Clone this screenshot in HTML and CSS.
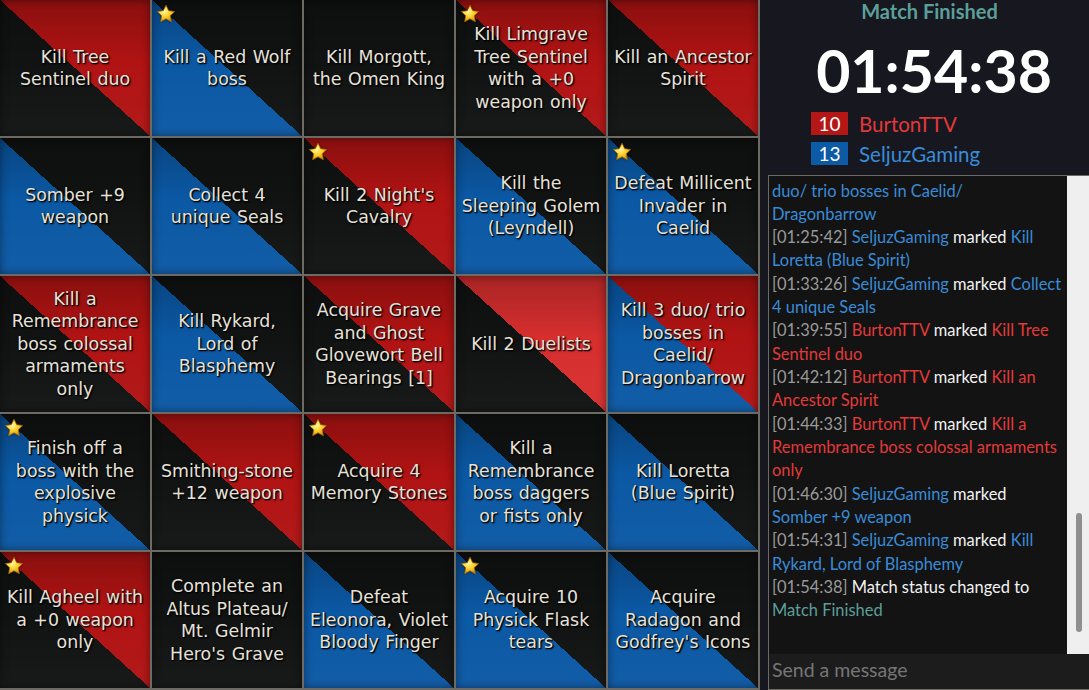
FILE: index.html
```html
<!DOCTYPE html>
<html lang="en">
<head>
<meta charset="utf-8">
<title>Bingo Match</title>
<link rel="stylesheet" href="styles.css">
</head>
<body>
<svg class="defs" width="0" height="0" aria-hidden="true">
  <defs>
    <radialGradient id="starFill" cx="40%" cy="35%" r="70%">
      <stop offset="0" stop-color="#fff7b0"/>
      <stop offset="0.45" stop-color="#ffd633"/>
      <stop offset="1" stop-color="#d98e00"/>
    </radialGradient>
    <symbol id="star" viewBox="0 0 24 24">
      <path d="M12 1.6l3.2 6.5 7.1 1-5.2 5 1.3 7.1L12 17.8l-6.4 3.4 1.3-7.1-5.2-5 7.1-1z" fill="url(#starFill)" stroke="#a86d00" stroke-width="0.9" stroke-linejoin="round"/>
    </symbol>
  </defs>
</svg>
<main class="board">
  <div class="cell red"><span>Kill Tree Sentinel duo</span></div>
  <div class="cell blue"><svg class="star"><use href="#star"/></svg><span>Kill a Red Wolf boss</span></div>
  <div class="cell"><span>Kill Morgott, the Omen King</span></div>
  <div class="cell red"><svg class="star"><use href="#star"/></svg><span>Kill Limgrave Tree Sentinel with a +0 weapon only</span></div>
  <div class="cell red"><span>Kill an Ancestor Spirit</span></div>

  <div class="cell blue"><span>Somber +9 weapon</span></div>
  <div class="cell blue"><span>Collect 4 unique Seals</span></div>
  <div class="cell red"><svg class="star"><use href="#star"/></svg><span>Kill 2 Night's Cavalry</span></div>
  <div class="cell blue"><span>Kill the Sleeping Golem (Leyndell)</span></div>
  <div class="cell blue"><svg class="star"><use href="#star"/></svg><span>Defeat Millicent Invader in Caelid</span></div>

  <div class="cell red"><span>Kill a Remembrance boss colossal armaments only</span></div>
  <div class="cell blue"><span>Kill Rykard, Lord of Blasphemy</span></div>
  <div class="cell red"><span>Acquire Grave and Ghost Glovewort Bell Bearings [1]</span></div>
  <div class="cell hot"><span>Kill 2 Duelists</span></div>
  <div class="cell red blue"><span>Kill 3 duo/ trio bosses in Caelid/ Dragonbarrow</span></div>

  <div class="cell blue"><svg class="star"><use href="#star"/></svg><span>Finish off a boss with the explosive physick</span></div>
  <div class="cell red"><span>Smithing-stone +12 weapon</span></div>
  <div class="cell red"><svg class="star"><use href="#star"/></svg><span>Acquire 4 Memory Stones</span></div>
  <div class="cell blue"><span>Kill a Remembrance boss daggers or fists only</span></div>
  <div class="cell blue"><span>Kill Loretta (Blue Spirit)</span></div>

  <div class="cell red"><svg class="star"><use href="#star"/></svg><span>Kill Agheel with a +0 weapon only</span></div>
  <div class="cell"><span>Complete an Altus Plateau/ Mt. Gelmir Hero's Grave</span></div>
  <div class="cell blue"><span>Defeat Eleonora, Violet Bloody Finger</span></div>
  <div class="cell blue"><svg class="star"><use href="#star"/></svg><span>Acquire 10 Physick Flask tears</span></div>
  <div class="cell blue"><span>Acquire Radagon and Godfrey's Icons</span></div>
</main>

<aside class="side">
  <div class="status">Match Finished</div>
  <div class="timer">01:54:38</div>
  <div class="scores">
    <div class="score"><span class="pts pts-red">10</span><span class="name c-red">BurtonTTV</span></div>
    <div class="score"><span class="pts pts-blue">13</span><span class="name c-blue">SeljuzGaming</span></div>
  </div>
  <section class="chat">
    <div class="chat-body">
      <div class="log">
        <p><span class="c-blue">duo/ trio bosses in Caelid/ Dragonbarrow</span></p>
        <p><span class="ts">[01:25:42]</span> <span class="c-blue">SeljuzGaming</span> <span class="w">marked</span> <span class="c-blue">Kill Loretta (Blue Spirit)</span></p>
        <p><span class="ts">[01:33:26]</span> <span class="c-blue">SeljuzGaming</span> <span class="w">marked</span> <span class="c-blue">Collect 4 unique Seals</span></p>
        <p><span class="ts">[01:39:55]</span> <span class="c-red">BurtonTTV</span> <span class="w">marked</span> <span class="c-red">Kill Tree Sentinel duo</span></p>
        <p><span class="ts">[01:42:12]</span> <span class="c-red">BurtonTTV</span> <span class="w">marked</span> <span class="c-red">Kill an Ancestor Spirit</span></p>
        <p><span class="ts">[01:44:33]</span> <span class="c-red">BurtonTTV</span> <span class="w">marked</span> <span class="c-red">Kill a Remembrance boss colossal armaments only</span></p>
        <p><span class="ts">[01:46:30]</span> <span class="c-blue">SeljuzGaming</span> <span class="w">marked</span> <span class="c-blue">Somber +9 weapon</span></p>
        <p><span class="ts">[01:54:31]</span> <span class="c-blue">SeljuzGaming</span> <span class="w">marked</span> <span class="c-blue">Kill Rykard, Lord of Blasphemy</span></p>
        <p><span class="ts">[01:54:38]</span> <span class="w">Match status changed to</span> <span class="c-teal">Match Finished</span></p>
      </div>
      <div class="track"><div class="thumb"></div></div>
    </div>
    <input class="msg" type="text" placeholder="Send a message">
  </section>
</aside>
</body>
</html>
```

FILE: styles.css
```css
* { box-sizing: border-box; }

html, body {
  margin: 0;
  height: 100%;
}

body {
  background: #16171f;
  display: flex;
  overflow: hidden;
  width: 1089px;
  height: 690px;
}

.defs { position: absolute; width: 0; height: 0; }

.board {
  flex: none;
  width: 760px;
  height: 690px;
  display: grid;
  grid-template-columns: repeat(5, 150px);
  grid-template-rows: repeat(5, 136px);
  gap: 2px;
  padding: 0 2px 2px 0;
  background: #6d6963;
}

.cell {
  --ll: #111212;
  --ur: #111212;
  position: relative;
  display: flex;
  align-items: center;
  justify-content: center;
  padding: 0 5px;
  text-align: center;
  font-family: "DejaVu Sans", sans-serif;
  font-size: 17.4px;
  line-height: 22.5px;
  word-spacing: 1px;
  color: #e6e2da;
  text-shadow: 1px 1px 1px #000, 1px 1px 2px #000;
  background:
    linear-gradient(to bottom, rgba(0,0,0,0.22), rgba(0,0,0,0) 45%, rgba(255,255,255,0.03)),
    linear-gradient(to top right, var(--ll) 50%, var(--ur) 50%);
  box-shadow: inset 0 0 8px rgba(0,0,0,0.45);
}

.cell.red { --ur: #b11313; }
.cell.blue { --ll: #0b58a4; }
.cell.hot { --ur: #d72e2e; }

.star {
  position: absolute;
  left: 4px;
  top: 4px;
  width: 20px;
  height: 20px;
  filter: drop-shadow(0 0 1px rgba(0,0,0,0.5));
}

/* side panel */
.side {
  flex: 1;
  display: flex;
  flex-direction: column;
  min-width: 0;
  font-family: Lato, "Open Sans", sans-serif;
}

.status {
  text-align: center;
  color: #5c9f99;
  font-weight: 700;
  font-size: 20px;
  line-height: 22px;
  padding: 0 0 0 10px;
}

.timer {
  text-align: center;
  color: #ffffff;
  font-weight: 700;
  font-size: 59px;
  line-height: 60px;
  margin-top: 19px;
  padding-left: 19px;
}

.scores {
  margin: 11px 0 0 51px;
  display: flex;
  flex-direction: column;
  gap: 7px;
}

.score {
  display: flex;
  align-items: center;
  gap: 11px;
  height: 23px;
}

.pts {
  width: 37px;
  height: 23px;
  display: flex;
  align-items: center;
  justify-content: center;
  color: #fff;
  font-size: 19px;
}

.pts-red { background: #b51616; }
.pts-blue { background: #0d5aa6; }

.name {
  font-size: 20.5px;
}

.c-red { color: #e23a3a; }
.c-blue { color: #3a8bd8; }
.c-teal { color: #5c9f99; }
.w { color: #f2f2f2; }
.ts { color: #9a9a9a; }

.chat {
  flex: 1;
  margin: 10px 0 0 8px;
  border: 1px solid #6d6963;
  border-right: none;
  display: flex;
  flex-direction: column;
  min-height: 0;
}

.chat-body {
  flex: 1;
  display: flex;
  min-height: 0;
  background: #131313;
}

.log {
  flex: 1;
  overflow: hidden;
  padding: 3.5px 2px 0 3px;
  font-size: 16.45px;
  line-height: 23.33px;
}

.log p { margin: 0; }

.track {
  flex: none;
  width: 22px;
  background: #efefef;
  padding-top: 337px;
}

.thumb {
  width: 6px;
  height: 119px;
  margin-left: 9px;
  border-radius: 3px;
  background: #8f8f8f;
}

.msg {
  flex: none;
  height: 35px;
  border: none;
  background: #1c1c1c;
  color: #ddd;
  font-family: inherit;
  font-size: 19.5px;
  padding: 0 3px 5px;
  outline: none;
}

.msg::placeholder { color: #767676; }
```
